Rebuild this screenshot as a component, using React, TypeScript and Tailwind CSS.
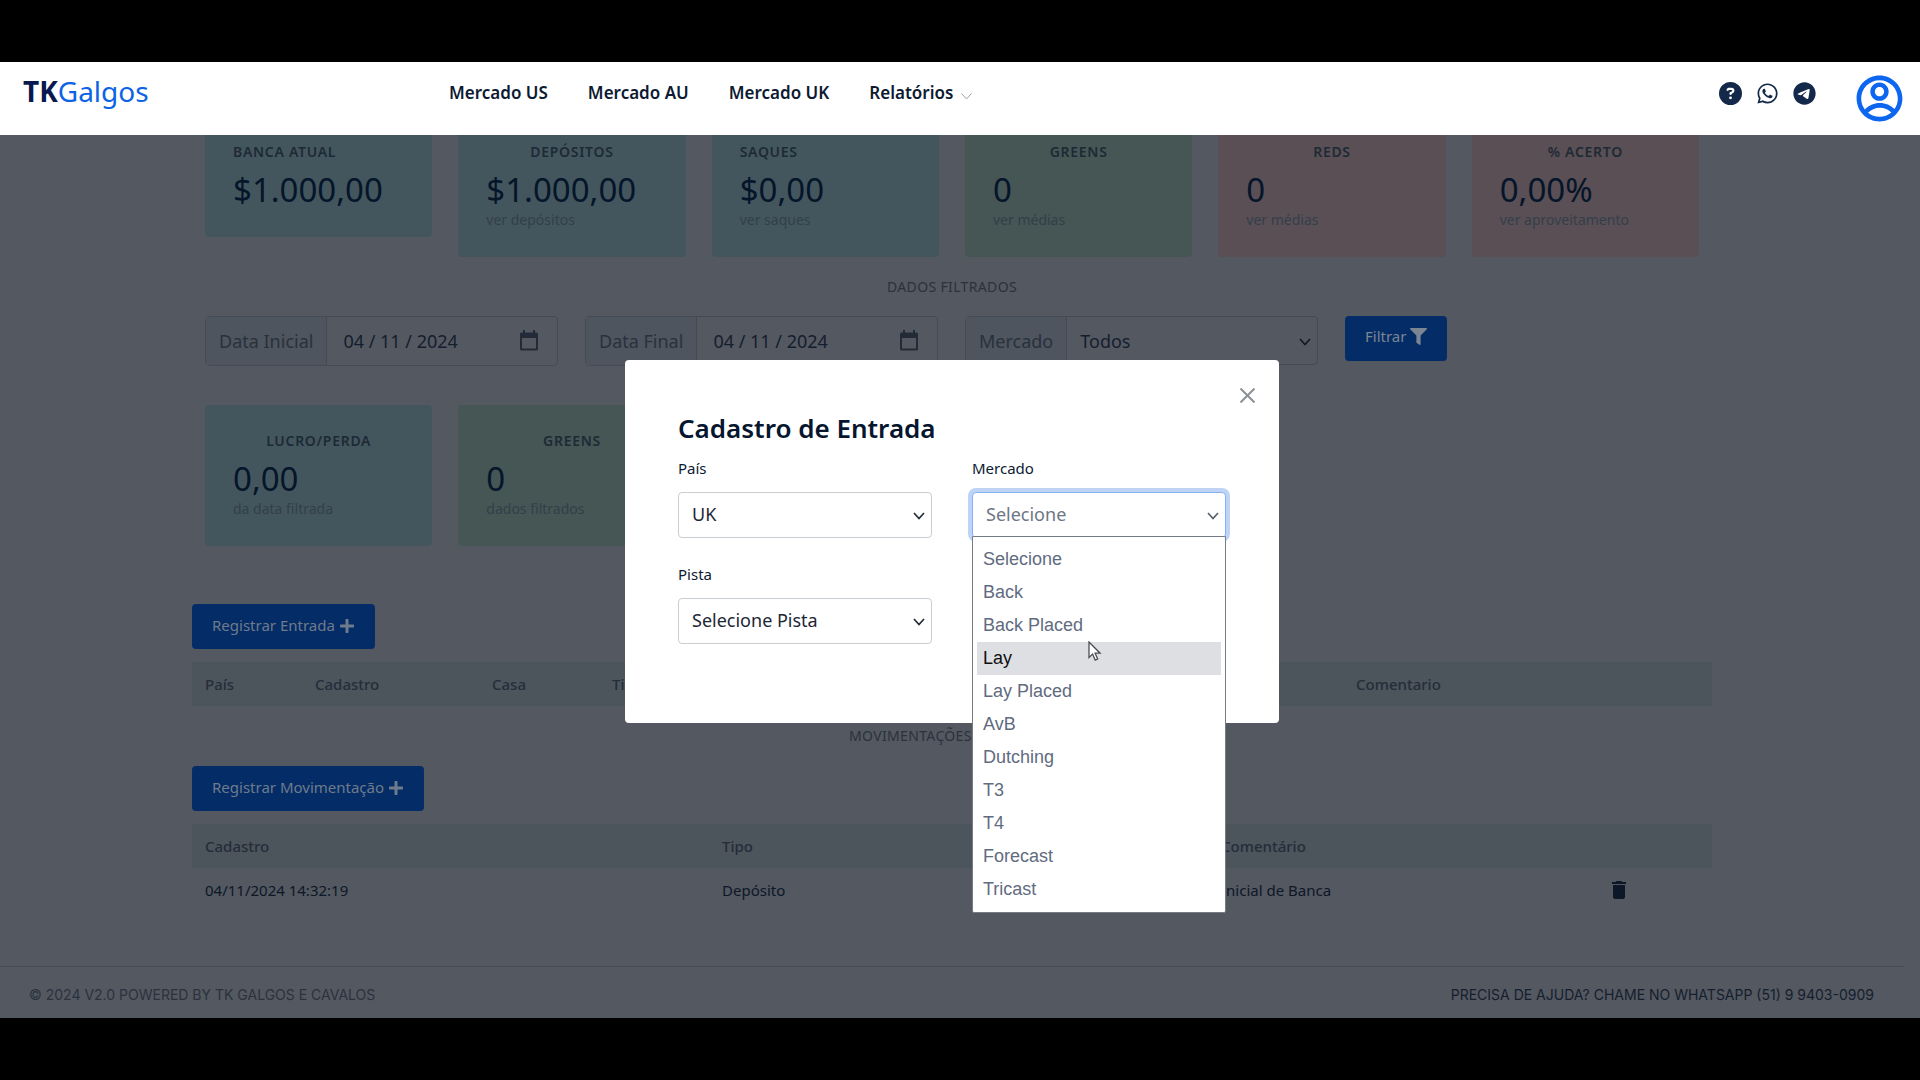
import { useState } from 'react';
import { FaFilter, FaPlus } from 'react-icons/fa';
import { FaCircleQuestion, FaTelegram, FaWhatsapp } from 'react-icons/fa6';
import { MdDelete } from 'react-icons/md';
import { RiAccountCircleLine } from 'react-icons/ri';

type Stat = { label: string; value: string; note?: string; tone: 'blue' | 'green' | 'red'; left?: boolean };

const tones = {
    blue: 'bg-[#44565d]',
    green: 'bg-[#455654]',
    red: 'bg-[#5a4f55]',
};

const totals: Stat[] = [
    { label: 'BANCA ATUAL', value: '$1.000,00', tone: 'blue', left: true },
    { label: 'DEPÓSITOS', value: '$1.000,00', note: 'ver depósitos', tone: 'blue' },
    { label: 'SAQUES', value: '$0,00', note: 'ver saques', tone: 'blue', left: true },
    { label: 'GREENS', value: '0', note: 'ver médias', tone: 'green' },
    { label: 'REDS', value: '0', note: 'ver médias', tone: 'red' },
    { label: '% ACERTO', value: '0,00%', note: 'ver aproveitamento', tone: 'red' },
];

const filtered: Stat[] = [
    { label: 'LUCRO/PERDA', value: '0,00', note: 'da data filtrada', tone: 'blue' },
    { label: 'GREENS', value: '0', note: 'dados filtrados', tone: 'green' },
];

const markets = [
    'Selecione', 'Back', 'Back Placed', 'Lay', 'Lay Placed', 'AvB',
    'Dutching', 'T3', 'T4', 'Forecast', 'Tricast',
];

function Chevron({ className }: { className: string }) {
    return (
        <svg className={className} viewBox="0 0 12 8" fill="none" stroke="currentColor" strokeWidth={1.7}>
            <path d="M1 1l5 5.500L11 1" />
        </svg>
    );
}

function CalendarIcon() {
    return (
        <svg className="w-5 h-[22px] text-[#242b38]" viewBox="0 0 20 22" fill="currentColor">
            <path fillRule="evenodd" d="M4 0h2v2.500h8V0h2v2.500h1.500q1.500 0 1.500 1.500V19q0 1.500-1.500 1.500H2.500Q1 20.500 1 19V4q0-1.500 1.500-1.500H4zM3 8v10.500h14V8z" />
        </svg>
    );
}

function StatCard({ label, value, note, tone, left }: Stat) {
    return (
        <div className={`rounded px-7 pt-6 pb-[27px] ${tones[tone]}`}>
            <h6 className={`text-sm leading-6 font-semibold tracking-wider text-[#1d2a36] ${left ? '' : 'text-center'}`}>{label}</h6>
            <div className="mt-1.5 text-[33px] leading-10 text-[#05152a]">{value}</div>
            {note && <a href="#" className="block text-sm leading-5 text-[#333f4a]">{note}</a>}
        </div>
    );
}

function DateField({ id, label }: { id: string; label: string }) {
    return (
        <div className="flex h-[50px] rounded border border-[#454b54]">
            <label htmlFor={id} className="flex items-center px-[13px] bg-[#4e555e] border-r border-[#454b54] text-lg text-[#29313d]">{label}</label>
            <input id={id} defaultValue="04 / 11 / 2024" className="flex-1 min-w-0 pl-4 bg-transparent text-lg text-[#141e2e]" />
            <button aria-label="Abrir calendário" className="pr-[18px]"><CalendarIcon /></button>
        </div>
    );
}

function SelectField({ id, label, value, focused, children }: {
    id: string;
    label: string;
    value: string;
    focused?: boolean;
    children?: React.ReactNode;
}) {
    return (
        <div>
            <label htmlFor={id} className="block text-[15px] leading-6 text-[#0c1a32]">{label}</label>
            <div className="relative mt-3">
                <select
                    id={id}
                    className={`block w-full h-[46px] appearance-none rounded border bg-white pl-[13px] pb-0.5 text-lg outline-none ${focused ? 'border-[#86b0f5] ring-4 ring-[#bfd3f5] text-[#6d7685]' : 'border-[#c9ced3] text-[#1d2635]'}`}
                >
                    <option>{value}</option>
                </select>
                <Chevron className={`absolute right-[7px] top-5 w-3 h-2 ${focused ? 'text-[#5a6068]' : 'text-[#222b36]'}`} />
                {children}
            </div>
        </div>
    );
}

function NavBar() {
    return (
        <header className="relative z-10 flex h-[73px] items-start bg-white">
            <a href="#" className="w-[449px] pl-[23px] pt-2 text-[28px] leading-[42px] text-[#0d63e5]">
                <b className="text-[#08194f]">TK</b>Galgos
            </a>
            <nav className="flex gap-10 pt-[17px] text-[17px] leading-7 font-semibold text-[#0c1a32]">
                <a href="#">Mercado US</a>
                <a href="#">Mercado AU</a>
                <a href="#">Mercado UK</a>
                <a href="#" className="flex items-center gap-2">
                    Relatórios
                    <svg className="mt-1.5 w-[11px] h-[7px] text-[#9aa1ab]" viewBox="0 0 11 7" fill="none" stroke="currentColor">
                        <path d="M.5 .5l5 5.500 5-5.500" />
                    </svg>
                </a>
            </nav>
            <div className="ml-auto flex gap-[14px] pt-5 pr-9 text-[23px] text-[#14284a]">
                <a href="#" aria-label="Ajuda"><FaCircleQuestion /></a>
                <a href="#" aria-label="WhatsApp"><FaWhatsapp /></a>
                <a href="#" aria-label="Telegram"><FaTelegram /></a>
            </div>
            <button aria-label="Conta" className="pt-[9px] pr-[13px] text-[#0d66f0]">
                <RiAccountCircleLine size={55} />
            </button>
        </header>
    );
}

function EntryModal() {
    const [active, setActive] = useState('Lay');
    return (
        <div className="absolute inset-x-0 top-[360px] z-20 flex justify-center pr-4">
            <div role="dialog" aria-labelledby="modal-title" className="w-[654px] h-[363px] rounded bg-white px-[53px] pt-5">
                <div className="flex justify-end">
                    <button aria-label="Fechar" className="-mr-[37px] p-2 text-[#8c9198]">
                        <svg className="w-[15px] h-[15px]" viewBox="0 0 15 15" fill="none" stroke="currentColor" strokeWidth={2}>
                            <path d="M.5 .5l14 14M14.500 .5l-14 14" />
                        </svg>
                    </button>
                </div>
                <h2 id="modal-title" className="-mt-px text-[26px] leading-9 font-semibold text-[#06162f]">Cadastro de Entrada</h2>
                <div className="mt-2.5 grid grid-cols-2 gap-x-10 gap-y-6">
                    <SelectField id="pais" label="País" value="UK" />
                    <SelectField id="mercado" label="Mercado" value="Selecione" focused>
                        <ul
                            role="listbox"
                            className="absolute left-0 top-11 w-full rounded-b-xs border border-[#767c84] bg-white px-1 py-1.5 text-lg leading-[33px] text-[#5f6b80] font-['Liberation_Sans',Arial,sans-serif]"
                        >
                            {markets.map((m) => (
                                <li
                                    key={m}
                                    role="option"
                                    aria-selected={m === active}
                                    onMouseEnter={() => setActive(m)}
                                    className={`px-1.5 ${m === active ? 'bg-[#dedfe3] text-[#101010]' : ''}`}
                                >
                                    {m}
                                </li>
                            ))}
                        </ul>
                    </SelectField>
                    <SelectField id="pista" label="Pista" value="Selecione Pista" />
                </div>
            </div>
            {/* Mouse pointer */}
            <svg className="absolute left-[1088px] top-[281px] w-[14px] h-[21px]" viewBox="0 0 14 21" fill="#fff" stroke="#4a4d52" strokeWidth={1.3}>
                <path d="M1 1v15.500l3.600-3.400 2.600 6 2.500-1.100-2.600-5.800h5z" />
            </svg>
        </div>
    );
}

export default function App() {
    return (
        <div className="relative min-h-screen bg-black py-[62px] font-['Noto_Sans','Open_Sans',sans-serif]">
            <NavBar />
            <div className="bg-[#545860] pr-4">
                <main className="mx-auto max-w-[1520px]">
                    <section className="-mt-[19px] grid grid-cols-6 items-start gap-x-[26px] px-[13px]">
                        {totals.map((s) => <StatCard key={s.label} {...s} />)}
                    </section>

                    <h5 className="mt-[18px] text-center text-sm leading-6 tracking-wide text-[#2a323e]">DADOS FILTRADOS</h5>

                    <section className="mt-[17px] grid grid-cols-[353px_353px_353px_auto] items-start justify-start gap-x-[27px] px-[13px]">
                        <DateField id="data-inicial" label="Data Inicial" />
                        <DateField id="data-final" label="Data Final" />
                        <div className="relative flex h-[49px] rounded border border-[#454b54]">
                            <label htmlFor="filtro-mercado" className="flex items-center px-[13px] bg-[#4e555e] border-r border-[#454b54] text-lg text-[#29313d]">Mercado</label>
                            <select id="filtro-mercado" className="flex-1 appearance-none pl-[13px] bg-transparent text-lg text-[#141e2e]">
                                <option>Todos</option>
                            </select>
                            <Chevron className="absolute right-[6px] top-[21px] w-3 h-2 text-[#141a24]" />
                        </div>
                        <button className="flex h-[45px] items-center gap-1 rounded bg-[#042c66] px-5 pb-1 text-[15px] text-[#7c8592]">
                            Filtrar <FaFilter size={17} />
                        </button>
                    </section>

                    <section className="mt-[39px] grid grid-cols-6 items-start gap-x-[26px] px-[13px]">
                        {filtered.map((s) => <StatCard key={s.label} {...s} />)}
                    </section>

                    <button className="mt-[58px] flex h-[45px] items-center gap-1 rounded bg-[#042c66] px-5 pb-0.5 text-[15px] text-[#6f7b8c]">
                        Registrar Entrada <FaPlus size={16} />
                    </button>
                    <table className="mt-[13px] w-full table-fixed text-left text-[15px] leading-6">
                        <thead className="bg-[#4c545c] text-[#242d39]">
                            <tr>
                                <th className="w-[110px] py-[10px] pl-[13px] font-medium">País</th>
                                <th className="w-[177px] pl-[13px] font-medium">Cadastro</th>
                                <th className="w-[120px] pl-[13px] font-medium">Casa</th>
                                <th className="pl-[13px] font-medium">Tipo</th>
                                <th className="w-[369px] pl-[13px] font-medium">Comentario</th>
                            </tr>
                        </thead>
                    </table>

                    <h5 className="mx-auto mt-[18px] w-[206px] text-sm leading-6 tracking-wide text-[#2a323e]">MOVIMENTAÇÕES</h5>

                    <button className="mt-[18px] flex h-[45px] items-center gap-1 rounded bg-[#042c66] px-5 pb-0.5 text-[15px] text-[#6f7b8c]">
                        Registrar Movimentação <FaPlus size={16} />
                    </button>
                    <table className="mt-[13px] w-full table-fixed text-left text-[15px] leading-6">
                        <thead className="bg-[#4c545c] text-[#242d39]">
                            <tr>
                                <th className="w-[517px] py-[10px] pl-[13px] font-medium">Cadastro</th>
                                <th className="w-[499px] pl-[13px] font-medium">Tipo</th>
                                <th className="pl-[13px] font-medium">Comentário</th>
                                <th className="w-[113px]" />
                            </tr>
                        </thead>
                        <tbody className="text-[#0c1728]">
                            <tr>
                                <td className="py-[10px] pl-[13px]">04/11/2024 14:32:19</td>
                                <td className="pl-[13px]">Depósito</td>
                                <td className="pl-[13px]">Inicial de Banca</td>
                                <td className="pl-2">
                                    <button aria-label="Excluir" className="block"><MdDelete size={24} /></button>
                                </td>
                            </tr>
                        </tbody>
                    </table>
                </main>
            </div>
            <div className="bg-[#545860] pr-4 pt-[54px]">
                <footer className="flex justify-between border-t border-[#474c55] pl-[29px] pr-[30px] pt-4 pb-[11px] text-sm leading-6 text-[#2a323e] font-['Inter',sans-serif]">
                    <span>© 2024 V2.0 POWERED BY TK GALGOS E CAVALOS</span>
                    <a href="#" className="text-[#141e2e]">PRECISA DE AJUDA? CHAME NO WHATSAPP (51) 9 9403-0909</a>
                </footer>
            </div>
            <EntryModal />
        </div>
    );
}
